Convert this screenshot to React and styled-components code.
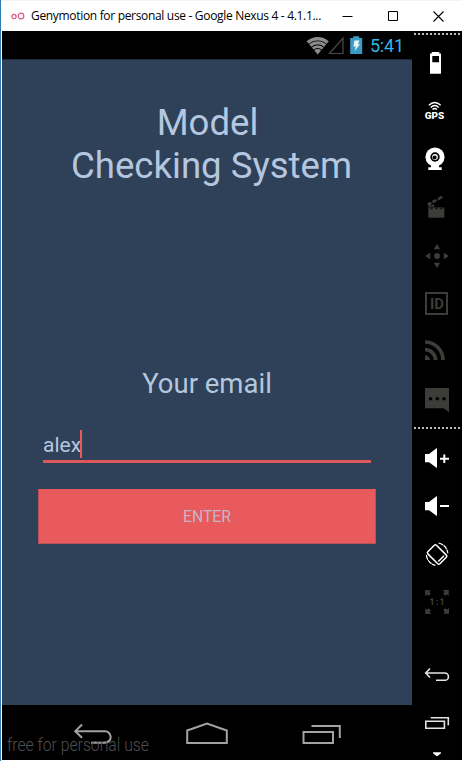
import React from 'react';
import styled, { createGlobalStyle } from 'styled-components';

const Global = createGlobalStyle`
  * { box-sizing: border-box; }
  html, body { margin: 0; padding: 0; background: #fff; overflow: hidden; }
  svg { display: block; flex: none; }
`;

const Window = styled.div`
  width: 462px;
  height: 761px;
  display: flex;
  flex-direction: column;
  background: #fff;
  border-left: 1px solid #2c7cb8;
  font-family: Roboto, sans-serif;
`;

const TitleBar = styled.header`
  height: 31px;
  flex: none;
  display: flex;
  align-items: center;
  padding-left: 10px;
  border-top: 1px solid #f3f3f3;
`;

const WindowTitle = styled.h1`
  margin: 0 0 0 6px;
  width: 294px;
  flex: none;
  font: 400 12px/16px "Open Sans", sans-serif;
  letter-spacing: -0.32px;
  color: #000;
  white-space: nowrap;
`;

const WindowButton = styled.button`
  width: 45.5px;
  height: 29px;
  flex: none;
  padding: 0;
  border: 0;
  background: none;
  display: flex;
  align-items: center;
  justify-content: center;
`;

const Body = styled.div`
  height: 729px;
  display: flex;
  padding-left: 1px;
`;

const Device = styled.main`
  width: 410px;
  display: flex;
  flex-direction: column;
  background: #000;
`;

const StatusBar = styled.div`
  height: 28px;
  flex: none;
  display: flex;
  padding-right: 8px;
  justify-content: flex-end;
  align-items: center;
`;

const Clock = styled.span`
  margin-left: 7px;
  font-size: 18px;
  line-height: 28px;
  letter-spacing: -0.15px;
  padding-top: 2px;
  color: #33b5e5;
`;

const Screen = styled.section`
  height: 646px;
  flex: none;
  display: flex;
  flex-direction: column;
  align-items: center;
  border-top: 1px solid #1f2b3a;
  background: #2e4159;
  color: #b4c7df;
`;

const Heading = styled.h2`
  margin: 41px 0 0;
  padding-left: 9px;
  display: flex;
  flex-direction: column;
  font-size: 36.6px;
  font-weight: 400;
  line-height: 43px;
  text-align: center;
`;

const HeadingLead = styled.span`
  padding-right: 8px;
`;

const Label = styled.label`
  margin-top: 179px;
  font-size: 27.5px;
  line-height: 36px;
`;

const Field = styled.div`
  width: 328px;
  height: 33px;
  margin-top: 28px;
  display: flex;
  align-items: flex-start;
  border-bottom: 3px solid #dc585a;
  font-size: 21px;
  line-height: 30px;
`;

const Caret = styled.i`
  width: 2px;
  height: 28px;
  margin-left: -1px;
  background: #e85a5b;
`;

const EnterButton = styled.button`
  width: 338px;
  height: 55px;
  margin-top: 26px;
  padding: 1px 0 0;
  border: 1px solid #b75058;
  border-top-color: #e85a5b;
  background: #e85a5b;
  color: #c5b5cd;
  font: 400 15.8px/20px Roboto, sans-serif;
`;

const NavBar = styled.nav`
  position: relative;
  height: 55px;
  display: flex;
  justify-content: center;
`;

const Watermark = styled.span`
  position: absolute;
  left: 5px;
  top: 29px;
  font-size: 17.5px;
  font-weight: 300;
  line-height: 22px;
  color: #505050;
  white-space: nowrap;
  transform: scaleX(0.9);
  transform-origin: left;
`;

const Toolbar = styled.aside`
  width: 50px;
  padding: 0 0 0 1px;
  background: #000;
  display: flex;
  flex-direction: column;
`;

const Divider = styled.div`
  height: 2px;
  flex: none;
  margin: ${p => p.$margin};
  background: repeating-linear-gradient(90deg, #bdbdbd 0 2px, #000 2px 4px);
`;

const Tool = styled.button`
  width: 48px;
  height: 48px;
  flex: none;
  padding: 0;
  border: 0;
  background: none;
  color: ${p => (p.$off ? '#3c3c38' : '#fff')};
`;

const Group = styled.div`
  display: flex;
  flex-direction: column;
  flex: none;
  margin-top: ${p => p.$top || 0}px;
`;

const IconText = styled.text`
  font-family: Roboto, sans-serif;
  font-weight: ${p => p.$weight || 700};
  font-size: ${p => p.$size}px;
  fill: currentColor;
`;

const Icon = ({ off, label, children }) => (
  <Tool $off={off} aria-label={label}>
    <svg width="48" height="48" viewBox="0 0 48 48" fill="currentColor">{children}</svg>
  </Tool>
);

const NavIcon = ({ children }) => (
  <svg width="115" height="55" viewBox="0 0 115 55" fill="none" stroke="#a3a3a3" strokeWidth="2">{children}</svg>
);

const Speaker = () => <path d="M12 20h4l7.500-5.700H24v19.400h-.5L16 28.300h-4z" />;

const Corner = ({ turn }) => (
  <path transform={`rotate(${turn} 24 24)`} d="M12 12.300h6l-1.800 1.800 1.600 1.600-2.200 2.200-1.600-1.600L12 18.300z" />
);

export default function App() {
  return (
    <Window>
      <Global />
      <TitleBar>
        <svg width="14" height="10" viewBox="0 0 14 10" fill="none" stroke="#e0568c" strokeWidth="1.200">
          <circle cx="3" cy="5.500" r="2.100" />
          <circle cx="10" cy="5" r="2.800" />
        </svg>
        <WindowTitle>Genymotion for personal use - Google Nexus 4 - 4.1.1...</WindowTitle>
        <WindowButton aria-label="Minimize">
          <svg width="11" height="11" stroke="#000"><path d="M.5 5.500h10" /></svg>
        </WindowButton>
        <WindowButton aria-label="Maximize">
          <svg width="11" height="11" stroke="#000" fill="none"><path d="M.5.5h9v9h-9z" /></svg>
        </WindowButton>
        <WindowButton aria-label="Close">
          <svg width="11" height="11" stroke="#000" strokeWidth="1.100"><path d="M.5.5l10 10M10.500.5l-10 10" /></svg>
        </WindowButton>
      </TitleBar>
      <Body>
        <Device>
          <StatusBar>
            <svg width="57" height="28" viewBox="306 31 57 28">
              <clipPath id="wifi"><path d="M306.500 41Q317.700 32 329 41L317.700 54.500z" /></clipPath>
              <g clipPath="url(#wifi)" fill="none" stroke="#8c8c8c">
                <circle cx="317.700" cy="54" r="15.200" strokeWidth="3.400" />
                <circle cx="317.700" cy="54" r="11.200" strokeWidth="3" />
                <circle cx="317.700" cy="54" r="7.400" strokeWidth="2.800" />
                <circle cx="317.700" cy="54" r="2.500" strokeWidth="5" />
              </g>
              <path d="M343 38v15.500h-13.500z" fill="none" stroke="#4c4c4c" strokeWidth="1.200" />
              <path d="M350.200 38h3v-1.800h6V38h3v16h-12z" fill="#3a9cc4" />
              <path d="M354.500 40.500h5l-1.500 3.800h2l-5.500 7 1.300-4.800h-2.500z" fill="#e8f4f8" />
            </svg>
            <Clock>5:41</Clock>
          </StatusBar>
          <Screen>
            <Heading><HeadingLead>Model</HeadingLead><span>Checking System</span></Heading>
            <Label>Your email</Label>
            <Field>alex<Caret /></Field>
            <EnterButton>ENTER</EnterButton>
          </Screen>
          <NavBar>
            <NavIcon>
              <path d="M48 19.500l-6.800 6.800 6.800 6.500M41.500 26.300h29.500a5.700 5.700 0 0 1 0 11.400h-14" transform="translate(-1 0)" />
            </NavIcon>
            <NavIcon>
              <path d="M37.200 25.500l19.800-7 19.800 7v12.500H37.200z" />
            </NavIcon>
            <NavIcon>
              <path d="M38.500 27h29.500v11H38.500zM46.500 21h28.300v12" />
            </NavIcon>
            <Watermark>free for personal use</Watermark>
          </NavBar>
        </Device>
        <Toolbar>
          <Divider $margin="2px 0 4px 1px" />
          <Group>
            <Icon label="Battery">
              <path fillRule="evenodd" d="M18.700 13h7.600v1.500H28V34.700H17V14.500h1.700zM19.300 17v6.300H26V17z" />
            </Icon>
            <Icon label="GPS">
              <g fill="none" stroke="currentColor" strokeWidth="1.400">
                <path d="M15.800 18.200Q21.700 12.600 27.700 18.200M17.700 20.400Q21.700 16.700 25.700 20.400M19.500 22.500Q21.700 20.500 23.900 22.500" />
              </g>
              <IconText x="11.700" y="31.900" $size={8.8} $weight={900} textLength="19.500" lengthAdjust="spacingAndGlyphs">GPS</IconText>
            </Icon>
            <Icon label="Camera">
              <path d="M18 29h8v3.300h2.700V35H15.300v-2.700H18z" />
              <circle cx="22" cy="22" r="9.600" />
              <circle cx="22" cy="22" r="4.700" fill="#000" />
              <circle cx="22" cy="22" r="2.900" />
              <circle cx="21.600" cy="22.400" r="2" fill="#000" />
            </Icon>
            <Icon off label="Capture">
              <path d="M15.300 24.300h16v10.400h-16z" />
              <path d="M14.300 20.300l3-1.700 1.800 2.200-1.800 1.500 1.200 1.500h-2.900zM19 17.800l4-1.900.8 2.200-3.600 2.500zM24.500 14.900l4.200-2.200 1.200 2-4.800 3zM17 23.800l2-2h3l-1.500 2z" />
              <path d="M18 24.300h2.500l-1.300 2h-2.300zM23 24.300h2.300l-1.300 2h-2.300zM28 24.300h2.200l-1.300 2h-2.300z" fill="#000" opacity=".7" />
            </Icon>
            <Icon off label="Remote control">
              <circle cx="24" cy="25" r="2.900" />
              <path d="M24 13l3.200 5.200h-6.400zM24 37l3.200-5.200h-6.400zM12 25l5.200-3.200v6.400zM36 25l-5.200-3.200v6.400z" />
            </Icon>
            <Icon off label="Identifiers">
              <path d="M13 14h21v21H13z" fill="none" stroke="currentColor" strokeWidth="2" />
              <IconText x="17" y="30.200" $size={15} $weight={700} textLength="14" lengthAdjust="spacingAndGlyphs">ID</IconText>
            </Icon>
            <Icon off label="Network">
              <path d="M12 28.200a4.900 4.900 0 0 1 4.900 4.900H12z" />
              <path d="M12 22.500A10.500 10.500 0 0 1 22.500 33M12 15A18 18 0 0 1 30 33" fill="none" stroke="currentColor" strokeWidth="3.700" />
            </Icon>
            <Icon off label="Phone">
              <path d="M12 13h24v24l-5.500-3.700H12z" />
              <g fill="#000"><circle cx="17.600" cy="23.700" r="1.800" /><circle cx="24.300" cy="23.700" r="1.800" /><circle cx="31" cy="23.700" r="1.800" /></g>
            </Icon>
          </Group>
          <Divider $margin="4px 0 5px 1px" />
          <Group>
            <Icon label="Volume up"><Speaker /><path d="M30.300 20.400h2v3.300H36v2h-3.700V29h-2v-3.300h-3.300v-2h3.300z" /></Icon>
            <Icon label="Volume down"><Speaker /><path d="M27 23h9v2h-9z" /></Icon>
            <Icon label="Rotate">
              <g fill="none" stroke="currentColor" strokeWidth="1.500">
                <rect x="18" y="16" width="12.200" height="17" rx="1.500" transform="rotate(-45 24.100 24.500)" />
                <path d="M25.300 31.500l5.700-5.700" />
                <path d="M25.500 13a11.300 11.300 0 0 1 9.300 10.300M13.400 25a11.300 11.300 0 0 0 9 10.300" strokeWidth="1.200" strokeDasharray="5 .6" />
              </g>
            </Icon>
            <Icon off label="Pixel perfect">
              <Corner turn={0} /><Corner turn={90} /><Corner turn={180} /><Corner turn={270} />
              <IconText x="16.500" y="27.200" $size={8.500} $weight={900} textLength="15" lengthAdjust="spacing">1:1</IconText>
            </Icon>
          </Group>
          <Group $top={25}>
            <Icon label="Back">
              <path d="M17 17.500l-4.300 4.500 4.300 4.500M13 22h18.800a3.600 3.600 0 0 1 0 7.300H23" fill="none" stroke="#e4e4e4" strokeWidth="1.600" />
            </Icon>
            <Icon label="Recent apps">
              <path d="M12.800 22.200h18.600v7H12.800zM17.700 18.700h17.600V26.300" fill="none" stroke="#e4e4e4" strokeWidth="1.600" />
            </Icon>
          </Group>
          <svg width="48" height="12" fill="#fff"><path d="M20 5.200h8v1L24.500 9h-1L20 6.200z" /></svg>
        </Toolbar>
      </Body>
    </Window>
  );
}
